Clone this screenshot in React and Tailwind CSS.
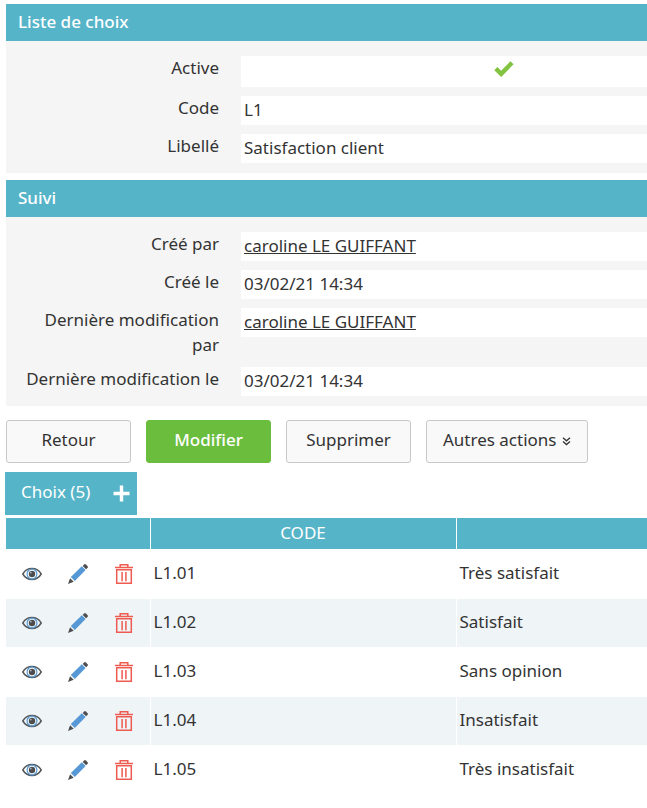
const choices = [
  { code: 'L1.01', label: 'Très satisfait' },
  { code: 'L1.02', label: 'Satisfait' },
  { code: 'L1.03', label: 'Sans opinion' },
  { code: 'L1.04', label: 'Insatisfait' },
  { code: 'L1.05', label: 'Très insatisfait' },
]

function CheckIcon() {
  return (
    <svg width="20" height="16" viewBox="0 0 20 16" role="img" aria-label="Oui">
      <path d="M1.8 7.6 7.2 12.8 18 1.8" fill="none" stroke="#82c341" strokeWidth="4.4" />
    </svg>
  )
}

function EyeIcon() {
  return (
    <svg width="20" height="20" viewBox="0 0 20 20" fill="none">
      <path d="M.8 10C3 6.2 6.3 4.6 10 4.6S17 6.2 19.2 10C17 13.8 13.7 15.4 10 15.4S3 13.8.8 10Z" stroke="#55595c" strokeWidth="1.5" />
      <circle cx="10" cy="10" r="4.9" stroke="#5a9bd5" strokeWidth="1.2" />
      <circle cx="10" cy="10" r="3.2" fill="#4d4d4f" />
      <circle cx="8.8" cy="8.6" r=".9" fill="#a9b6c0" />
    </svg>
  )
}

function PencilIcon() {
  return (
    <svg width="20" height="20" viewBox="0 0 20 20">
      <path d="M2.8 13.1 13.8 2.3 17.6 6.1 6.8 17.1Z" fill="#5598d5" />
      <path d="M14.7 1.9 16.2.4Q17-.3 17.9.5L19.6 2.2Q20.3 3 19.6 3.8L18.1 5.3Z" fill="#4d4d4f" />
      <path d="M2.1 14.2 5.7 17.8 0 20Z" fill="#4d4d4f" />
    </svg>
  )
}

function TrashIcon() {
  return (
    <svg width="20" height="20" viewBox="0 0 20 20" fill="none" stroke="#ee5b50" strokeWidth="1.5">
      <path d="M1 3.5H19M6.2 3V.8H13.8V3M2.7 5.8H17.3V19.2H2.7Z" />
      <path d="M8.1 8V17.2M11.9 8V17.2" />
    </svg>
  )
}

function Section({ title, children }) {
  return (
    <section>
      <h2 className="bg-[#56b4c8] px-3 pt-[5px] pb-[7px] leading-[25px] font-medium text-white">{title}</h2>
      <dl className="flex flex-col gap-[9px] bg-[#f5f5f5] pt-[15px] pb-[10px]">{children}</dl>
    </section>
  )
}

function Field({ label, children }) {
  return (
    <div className="flex items-start gap-[22px]">
      <dt className="-mt-px mb-px w-[213px] shrink-0 pl-3 text-right leading-[25px]">{label}</dt>
      <dd className="flex-1 bg-white px-[3px] pt-px pb-[3px] leading-[25px]">{children}</dd>
    </div>
  )
}

export default function App() {
  const buttonClass = 'min-w-[125px] rounded-[3px] border border-[#c8c8c8] bg-[#f9f9f9] px-4 pt-[6px] pb-[10px] leading-[25px]'

  return (
    <div className="overflow-x-hidden bg-white font-['Noto_Sans',sans-serif] text-[17px] text-[#333333]">
      <main className="min-w-[767px] pt-1 pl-[6px]">
        <div className="flex flex-col gap-[7px]">
          <Section title="Liste de choix">
            <Field label="Active">
              <div className="flex h-[27px] justify-center pt-1">
                <CheckIcon />
              </div>
            </Field>
            <Field label="Code">L1</Field>
            <Field label="Libellé">Satisfaction client</Field>
          </Section>

          <Section title="Suivi">
            <Field label="Créé par">
              <a href="#user" className="underline">caroline LE GUIFFANT</a>
            </Field>
            <Field label="Créé le">03/02/21 14:34</Field>
            <Field label="Dernière modification par">
              <a href="#user" className="underline">caroline LE GUIFFANT</a>
            </Field>
            <Field label="Dernière modification le">03/02/21 14:34</Field>
          </Section>
        </div>

        {/* Actions */}
        <div className="mt-[14px] flex gap-[15px]">
          <button className={buttonClass}>Retour</button>
          <button className="min-w-[125px] rounded-[3px] border border-[#6bbd3e] bg-[#6bbd3e] px-4 pt-[6px] pb-[10px] leading-[25px] font-medium text-white">
            Modifier
          </button>
          <button className={buttonClass}>Supprimer</button>
          <button className={buttonClass}>
            <span className="flex items-center gap-[5px]">
              Autres actions
              <svg width="9" height="9" viewBox="0 0 9 9" fill="none" stroke="#333333" strokeWidth="1.3" className="mt-1">
                <path d="M1 .8 4.5 3.8 8 .8M1 4.6 4.5 7.6 8 4.6" />
              </svg>
            </span>
          </button>
        </div>

        {/* Choices */}
        <div className="mt-[9px] -ml-px flex">
          <div className="flex h-[43px] items-center gap-[23px] bg-[#56b4c8] pr-[7px] pl-4 text-white">
            <h3 className="pb-[3px]">Choix (5)</h3>
            <button aria-label="Ajouter">
              <svg width="17" height="17" viewBox="0 0 17 17" fill="none" stroke="white" strokeWidth="3.4">
                <path d="M8.5.5V16.5M.5 8.5H16.5" />
              </svg>
            </button>
          </div>
        </div>

        <table className="mt-[3px] w-full table-fixed border-collapse">
          <thead>
            <tr className="h-[31px] bg-[#56b4c8] text-white">
              <th className="w-[144px] border-r border-white p-0" aria-label="Actions" />
              <th className="w-[306px] border-r border-white p-0 pb-[2px] leading-[25px] font-normal">CODE</th>
              <th className="p-0" aria-label="Libellé" />
            </tr>
          </thead>
          <tbody>
            {choices.map(c => (
              <tr key={c.code} className="h-[49px] border-t border-white even:bg-[#eff4f7]">
                <td className="border-r border-white py-0 pl-4">
                  <div className="flex gap-[26px]">
                    <button aria-label="Voir"><EyeIcon /></button>
                    <button aria-label="Modifier"><PencilIcon /></button>
                    <button aria-label="Supprimer"><TrashIcon /></button>
                  </div>
                </td>
                <td className="border-r border-white px-[3px] pb-[2px] leading-[25px]">{c.code}</td>
                <td className="px-[3px] pb-[2px] leading-[25px]">{c.label}</td>
              </tr>
            ))}
          </tbody>
        </table>
      </main>
    </div>
  )
}
